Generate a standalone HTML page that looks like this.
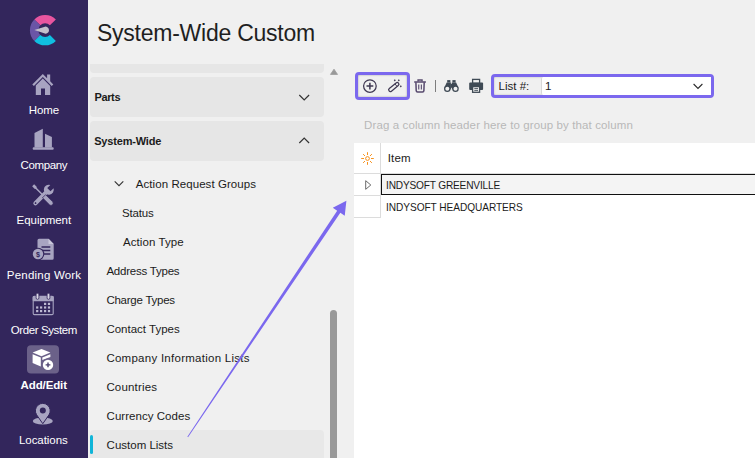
<!DOCTYPE html>
<html><head><meta charset="utf-8">
<style>
*{box-sizing:border-box;margin:0;padding:0}
html,body{width:755px;height:458px;overflow:hidden;background:#f0f0f0;font-family:"Liberation Sans","DejaVu Sans",sans-serif;color:#1b1b1b}
#side{position:absolute;left:0;top:0;width:88px;height:458px;background:#33265c}
.tx{position:absolute;white-space:nowrap;line-height:1.15;font-weight:400}
.grp{position:absolute;left:90px;width:234px;background:#e6e6e6;border-radius:4px}
.abs{position:absolute}
</style></head><body>
<div id="side">
<svg class="abs" style="left:0;top:0" width="88" height="458" viewBox="0 0 88 458">
<!-- logo -->
<g transform="translate(45.1 30.15)">
<path d="M10.75 -10.75 A15.2 15.2 0 0 0 -10.75 -10.75 L-4.8 -4.8 A6.8 6.8 0 0 1 4.8 -4.8 Z" fill="#e8559f"/>
<path d="M-10.75 -10.75 A15.2 15.2 0 0 0 -10.75 10.75 L-4.8 4.8 A6.8 6.8 0 0 1 -4.8 -4.8 Z" fill="#6a55a6"/>
<path d="M-10.75 10.75 A15.2 15.2 0 0 0 10.75 10.75 L4.8 4.8 A6.8 6.8 0 0 1 -4.8 4.8 Z" fill="#10bfe0"/>
<path d="M-10.7 -0.2 L-1 -3.2 A3.5 3.5 0 1 1 -1 3.2 Z" fill="#c3c0cb"/>
</g>
<g fill="#a8a4c1">
<!-- home -->
<path d="M42.8 73.9 L32.3 84.4 L33.9 86 L42.8 77.1 L51.7 86 L53.3 84.4 L50.2 81.3 L50.2 74.4 L47.1 74.4 L47.1 78.2 Z"/>
<path d="M42.8 78.6 L35.8 85.5 L35.8 95.1 L41 95.1 L41 88.6 L45 88.6 L45 95.1 L50.2 95.1 L50.2 85.9 Z"/>
<!-- company -->
<path d="M34.5 133.1 L42.8 128.7 L42.8 147.5 L34.5 147.5 Z"/>
<path d="M45 133.8 L51.9 137 L51.9 147.5 L45 147.5 Z"/>
<rect x="32.7" y="147.3" width="21" height="2.4" rx="1"/>
<!-- pending: doc -->
<path d="M39 238.7 L48.5 238.7 L53.7 244 L53.7 258.2 A1.5 1.5 0 0 1 52.2 259.7 L39 259.7 A1.5 1.5 0 0 1 37.5 258.2 L37.5 240.2 A1.5 1.5 0 0 1 39 238.7 Z"/>
</g>
<!-- pending details -->
<path d="M48.5 238.7 L48.5 244 L53.7 244 Z" fill="#c9c6da"/>
<g stroke="#33265c" stroke-width="1.3"><path d="M41.5 247 H50.3 M41.5 250.5 H50.3 M41.5 254 H50.3"/></g>
<circle cx="38" cy="254" r="6.3" fill="#33265c"/>
<circle cx="38" cy="254" r="5.2" fill="#a8a4c1"/>
<text x="38.1" y="256.6" font-size="7.2" font-weight="700" text-anchor="middle" fill="#33265c" font-family="Liberation Sans, sans-serif">$</text>
<!-- equipment -->
<g fill="#a8a4c1">
<g transform="translate(43.2 195.4) rotate(45)">
<path d="M-2.1 -4 L-2.1 11 A2.1 2.1 0 0 0 2.1 11 L2.1 -4 Z"/>
<path d="M-2.3 -12.4 A5 5 0 1 0 2.3 -12.4 L2.3 -8 L-2.3 -8 Z"/>
<circle cx="0" cy="10.8" r="0.9" fill="#33265c"/>
</g>
<g transform="translate(43.2 195.4) rotate(-45)">
<path d="M-1.4 -14.2 L1.4 -14.2 L1.5 -10.8 L0.75 -9.8 L0.75 0.5 L-0.75 0.5 L-0.75 -9.8 L-1.5 -10.8 Z"/>
<path d="M-2.2 1.2 L2.2 1.2 L2.2 11 A2.2 2.2 0 0 1 -2.2 11 Z" stroke="#33265c" stroke-width="0.7"/>
</g>
</g>
<!-- order system calendar -->
<rect x="33.2" y="296.4" width="20" height="18.2" rx="1.2" fill="none" stroke="#a8a4c1" stroke-width="1.1"/>
<rect x="32.7" y="295.9" width="21" height="5.4" rx="1" fill="#a8a4c1"/>
<g fill="#d9d6e6" stroke="#33265c" stroke-width="0.8"><rect x="36.1" y="293.3" width="2.8" height="6" rx="1.4"/><rect x="47.1" y="293.3" width="2.8" height="6" rx="1.4"/></g>
<g fill="#bdb9d2">
<rect x="44" y="302.8" width="2.2" height="2.2"/><rect x="47.9" y="302.8" width="2.2" height="2.2"/>
<rect x="36.1" y="306.4" width="2.2" height="2.2"/><rect x="40" y="306.4" width="2.2" height="2.2"/><rect x="44" y="306.4" width="2.2" height="2.2"/><rect x="47.9" y="306.4" width="2.2" height="2.2"/>
<rect x="36.1" y="310" width="2.2" height="2.2"/><rect x="40" y="310" width="2.2" height="2.2"/><rect x="44" y="310" width="2.2" height="2.2"/><rect x="47.9" y="310" width="2.2" height="2.2"/>
</g>
<!-- add/edit -->
<rect x="27" y="345.2" width="32" height="28.3" rx="4" fill="#6b6189"/>
<g fill="#fff">
<path d="M41.5 349 L50.4 352.6 L41.5 356.2 L32.6 352.6 Z"/>
<path d="M32.6 354.2 L40.8 357.5 L40.8 366.4 L32.6 363.1 Z"/>
<path d="M42.3 357.5 L50.4 354.2 L50.4 356.9 L42.3 360 Z"/>
</g>
<circle cx="48" cy="364.9" r="6.4" fill="#6b6189"/>
<circle cx="48" cy="364.9" r="5.2" fill="#fff"/>
<path d="M45.6 364.9 H50.4 M48 362.5 V367.3" stroke="#4b416f" stroke-width="1.4"/>
<!-- locations -->
<ellipse cx="42.8" cy="421" rx="10" ry="3.6" fill="#a8a4c1"/>
<path d="M42.8 423.7 L36.6 414.8 A7.4 7.4 0 1 1 49 414.8 Z" fill="#a8a4c1" stroke="#33265c" stroke-width="1"/>
<circle cx="42.8" cy="410.6" r="3" fill="#33265c"/>
</svg>
</div>

<!-- left list -->
<div class="grp" style="top:64px;height:8.5px;border-radius:0 0 4px 4px"></div>
<div class="grp" style="top:77px;height:40px">
<svg class="abs" style="left:208px;top:15px" width="14" height="10" viewBox="0 0 14 10"><path d="M1.3 3 L6.2 7.9 L11.1 3" fill="none" stroke="#333" stroke-width="1.2"/></svg></div>
<div class="grp" style="top:121px;height:40px">
<svg class="abs" style="left:208px;top:13.6px" width="14" height="10" viewBox="0 0 14 10"><path d="M1.3 8 L6.2 3.1 L11.1 8" fill="none" stroke="#333" stroke-width="1.2"/></svg></div>
<svg class="abs" style="left:113px;top:179px" width="12" height="9" viewBox="0 0 12 9"><path d="M1.7 2.3 L6 6.6 L10.3 2.3" fill="none" stroke="#333" stroke-width="1.1"/></svg>
<div class="abs" style="left:90px;top:430px;width:234px;height:28px;background:#e8e8e8;border-radius:4px 4px 0 0"></div>
<div class="abs" style="left:90px;top:435px;width:3px;height:19px;background:#10b5d8;border-radius:1.5px"></div>

<!-- scrollbar -->
<svg class="abs" style="left:328.5px;top:68px" width="10" height="9" viewBox="0 0 10 9"><path d="M5 1.2 L8.5 6.4 L1.5 6.4 Z" fill="#999" stroke="#999" stroke-width="0.8" stroke-linejoin="round"/></svg>
<div class="abs" style="left:330px;top:310px;width:7px;height:160px;background:#999;border-radius:3.5px"></div>

<!-- toolbar -->
<div class="abs" style="left:355px;top:72px;width:55px;height:28px;border:3px solid #7b68ee;border-radius:4px;box-shadow:inset 0 0 2px rgba(0,0,0,.35)"></div>
<div class="abs" style="left:491px;top:74px;width:223px;height:24px;border:3px solid #7b68ee;border-radius:4px;box-shadow:inset 0 0 2px rgba(0,0,0,.25)"></div>
<div class="abs" style="left:541px;top:77px;width:170px;height:18px;background:#fff;border-left:1px solid #d8d8d8;border-radius:2px 0 0 2px"></div>
<svg class="abs" style="left:340px;top:60px" width="415" height="60" viewBox="340 60 415 60">
<g fill="none" stroke="#3f3852" stroke-width="1.25">
<circle cx="369.9" cy="86.1" r="6.3"/>
<path d="M366.5 86.1 H373.3 M369.9 82.7 V89.5" stroke-width="1.5"/>
<g transform="translate(393.7 87.1) rotate(-39.5)"><rect x="-6" y="-1.7" width="12.2" height="3.4" rx="1.7"/><path d="M3 -1.7 V1.7" stroke-width="0.9"/></g>
</g>
<g fill="#3f3852"><path d="M394.8 79.2 l1 1.1 l-1 1.1 l-1 -1.1 Z M398.8 79.2 l1 1.1 l-1 1.1 l-1 -1.1 Z M400.8 85.2 l1 1.1 l-1 1.1 l-1 -1.1 Z"/></g>
<g fill="none" stroke="#57496e" stroke-width="1.5">
<path d="M414.2 82 H425.9"/>
<path d="M418 81.6 V80 H422.1 V81.6" stroke-width="1.3"/>
<path d="M415.9 82.3 L416.2 90.6 A1.4 1.4 0 0 0 417.6 91.9 L422.5 91.9 A1.4 1.4 0 0 0 423.9 90.6 L424.2 82.3"/>
<path d="M418.75 84.5 V89.5 M421.35 84.5 V89.5" stroke-width="1.1"/>
</g>
<path d="M435.5 80 V92" stroke="#7d7d7d" stroke-width="1"/>
<g fill="#3f4a55">
<rect x="447.2" y="80.1" width="3.2" height="2.4"/><rect x="452.4" y="80.1" width="3.2" height="2.4"/>
<path d="M446.7 82.4 L450.9 82.4 L450.9 89.5 L444.4 87.4 Z"/>
<path d="M451.9 82.4 L456.1 82.4 L458.4 87.4 L451.9 89.5 Z"/>
<rect x="450.5" y="83.8" width="1.8" height="4"/>
<circle cx="447.3" cy="88.7" r="3.25"/><circle cx="455.5" cy="88.7" r="3.25"/>
</g>
<circle cx="447.3" cy="88.7" r="2" fill="#f0f0f0"/>
<circle cx="455.5" cy="88.7" r="2" fill="#f0f0f0"/>
<rect x="472.6" y="79.4" width="7" height="4" fill="#f0f0f0" stroke="#3f4a55" stroke-width="1.3"/>
<rect x="469.2" y="82.6" width="13.9" height="7.4" rx="1" fill="#3f4a55"/>
<rect x="472.6" y="86.6" width="7" height="5.7" fill="#f0f0f0" stroke="#3f4a55" stroke-width="1.3"/>
<path d="M474.3 88.6 H478 M474.3 90.4 H478" stroke="#3f4a55" stroke-width="0.9"/>
<path d="M693.6 84 L698 88.4 L702.4 84" fill="none" stroke="#2a2a2a" stroke-width="1.1"/>
</svg>

<!-- grid -->
<div class="abs" style="left:354px;top:143px;width:401px;height:315px;background:#fff"></div>
<div class="abs" style="left:354px;top:173px;width:401px;height:1px;background:#dcdcdc"></div>
<div class="abs" style="left:380px;top:143px;width:1px;height:75px;background:#dcdcdc"></div>
<div class="abs" style="left:354px;top:195px;width:27px;height:1px;background:#dcdcdc"></div>
<div class="abs" style="left:354px;top:217px;width:27px;height:1px;background:#dcdcdc"></div>
<div class="abs" style="left:381px;top:174px;width:380px;height:21px;background:#f4f4f4;border:1px solid #111"></div>
<svg class="abs" style="left:358px;top:148px" width="20" height="50" viewBox="358 148 20 50">
<g stroke="#f7921e" stroke-width="1" fill="none"><circle cx="367.5" cy="158.5" r="1.9"/>
<path d="M367.5 152.2 V155 M367.5 162 V164.8 M361.2 158.5 H364 M371 158.5 H373.8 M363.1 154.1 L365 156 M370 161 L371.9 162.9 M363.1 162.9 L365 161 M370 156 L371.9 154.1"/></g>
<path d="M365.7 180.7 L370.8 185 L365.7 189.3 Z" fill="none" stroke="#6a6a6a" stroke-width="1"/>
</svg>

<div class="tx" id="t_title" style="left:96.90px;top:19.98px;font-size:23px;letter-spacing:-0.238px;color:#1f1f1f;">System-Wide Custom</div>
<div class="tx" id="t_parts" style="left:94.40px;top:91.34px;font-size:11px;letter-spacing:-0.338px;color:#1b1b1b;font-weight:700;">Parts</div>
<div class="tx" id="t_sw" style="left:94.20px;top:135.34px;font-size:11px;letter-spacing:-0.180px;color:#1b1b1b;font-weight:700;">System-Wide</div>
<div class="tx" id="t_arg" style="left:135.75px;top:177.69px;font-size:11.5px;letter-spacing:0.068px;color:#1b1b1b;">Action Request Groups</div>
<div class="tx" id="t_status" style="left:122.05px;top:206.69px;font-size:11.5px;letter-spacing:-0.180px;color:#1b1b1b;">Status</div>
<div class="tx" id="t_atype" style="left:122.95px;top:235.69px;font-size:11.5px;letter-spacing:0.090px;color:#1b1b1b;">Action Type</div>
<div class="tx" id="t_addr" style="left:106.40px;top:264.69px;font-size:11.5px;letter-spacing:-0.225px;color:#1b1b1b;">Address Types</div>
<div class="tx" id="t_charge" style="left:106.40px;top:293.69px;font-size:11.5px;letter-spacing:-0.245px;color:#1b1b1b;">Charge Types</div>
<div class="tx" id="t_contact" style="left:106.40px;top:322.69px;font-size:11.5px;letter-spacing:0.000px;color:#1b1b1b;">Contact Types</div>
<div class="tx" id="t_company" style="left:106.40px;top:351.69px;font-size:11.5px;letter-spacing:0.263px;color:#1b1b1b;">Company Information Lists</div>
<div class="tx" id="t_countries" style="left:106.40px;top:380.69px;font-size:11.5px;letter-spacing:0.169px;color:#1b1b1b;">Countries</div>
<div class="tx" id="t_currency" style="left:106.60px;top:409.69px;font-size:11.5px;letter-spacing:0.035px;color:#1b1b1b;">Currency Codes</div>
<div class="tx" id="t_custom" style="left:106.60px;top:438.69px;font-size:11.5px;letter-spacing:0.000px;color:#1b1b1b;">Custom Lists</div>
<div class="tx" id="t_home" style="left:28.85px;top:103.69px;font-size:11.5px;letter-spacing:-0.150px;color:#ffffff;">Home</div>
<div class="tx" id="t_comp" style="left:20.60px;top:158.59px;font-size:11.5px;letter-spacing:-0.375px;color:#ffffff;">Company</div>
<div class="tx" id="t_equip" style="left:16.60px;top:213.59px;font-size:11.5px;letter-spacing:-0.056px;color:#ffffff;">Equipment</div>
<div class="tx" id="t_pend" style="left:6.85px;top:268.59px;font-size:11.5px;letter-spacing:0.205px;color:#ffffff;">Pending Work</div>
<div class="tx" id="t_order" style="left:10.80px;top:323.59px;font-size:11.5px;letter-spacing:-0.409px;color:#ffffff;">Order System</div>
<div class="tx" id="t_add" style="left:20.60px;top:378.59px;font-size:11.5px;letter-spacing:-0.129px;color:#ffffff;font-weight:700;">Add/Edit</div>
<div class="tx" id="t_loc" style="left:19.00px;top:433.59px;font-size:11.5px;letter-spacing:-0.056px;color:#ffffff;">Locations</div>
<div class="tx" id="t_drag" style="left:364.05px;top:118.59px;font-size:11.5px;letter-spacing:0.112px;color:#b8b8b8;">Drag a column header here to group by that column</div>
<div class="tx" id="t_list" style="left:498.60px;top:79.59px;font-size:11.5px;letter-spacing:-0.000px;color:#1b1b1b;">List #:</div>
<div class="tx" id="t_one" style="left:545.00px;top:79.59px;font-size:11.5px;letter-spacing:0.000px;color:#1b1b1b;">1</div>
<div class="tx" id="t_item" style="left:387.70px;top:152.49px;font-size:11.5px;letter-spacing:0.150px;color:#1b1b1b;">Item</div>
<div class="tx" id="t_r1" style="left:385.60px;top:179.49px;font-size:11.5px;letter-spacing:-0.200px;color:#1b1b1b;transform:scaleX(0.88);transform-origin:0 0;">INDYSOFT GREENVILLE</div>
<div class="tx" id="t_r2" style="left:385.60px;top:200.59px;font-size:11.5px;letter-spacing:-0.067px;color:#1b1b1b;transform:scaleX(0.88);transform-origin:0 0;">INDYSOFT HEADQUARTERS</div>

<svg class="abs" style="left:0;top:0" width="755" height="458" viewBox="0 0 755 458"><path d="M187.35 436.67 L337.17 210.64 L332.77 207.69 L346.4 200.8 L344.73 215.71 L340.33 212.76 L188.05 437.13 Z" fill="#7b68ee"/></svg>
</body></html>
